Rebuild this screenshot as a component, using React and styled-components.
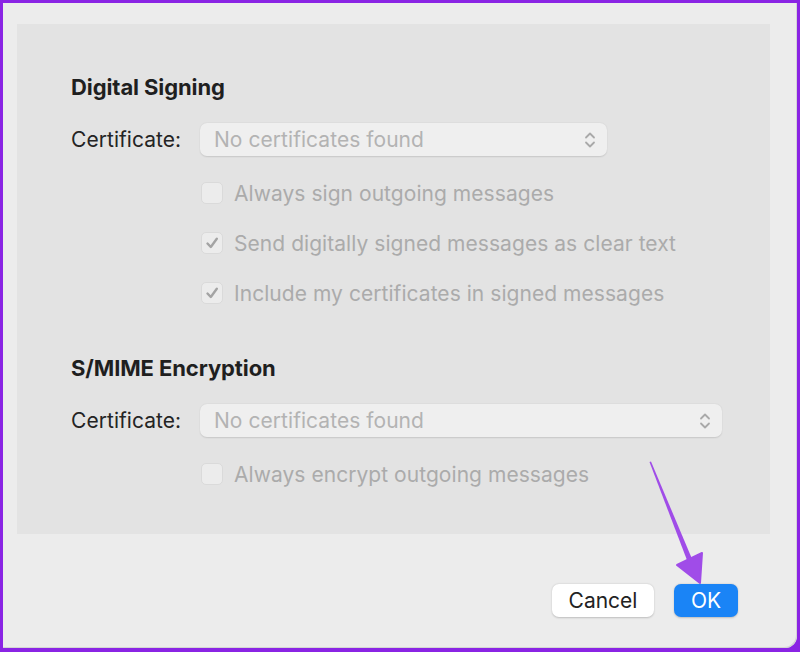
import React from 'react';
import styled, { createGlobalStyle } from 'styled-components';

const GlobalStyle = createGlobalStyle`
  html, body {
    margin: 0;
    padding: 0;
    background: #8a24e4;
  }
  body {
    font-family: Inter, "Noto Sans", "Liberation Sans", sans-serif;
    -webkit-font-smoothing: antialiased;
  }
`;

const Frame = styled.div`
  position: relative;
  width: 800px;
  height: 652px;
  box-sizing: border-box;
  padding: 3px 3px 4px 3px;
  background: #8a24e4;
`;

const Window = styled.div`
  height: 100%;
  box-sizing: border-box;
  background: #ececec;
  border-radius: 0 0 12px 0;
  box-shadow: inset -1px -1px 0 #d4d4d4;
  padding: 21px 27px 0 14px;
  display: flex;
  flex-direction: column;
`;

const Panel = styled.div`
  height: 510px;
  box-sizing: border-box;
  background: #e3e3e3;
  padding: 51px 0 0 54px;
  display: flex;
  flex-direction: column;
  gap: 48px;
`;

const Section = styled.section`
  display: flex;
  flex-direction: column;
`;

const Heading = styled.h2`
  margin: 0 0 24px;
  font-size: 22px;
  line-height: 24px;
  font-weight: 700;
  color: #1f1f1f;
  letter-spacing: -0.1px;
`;

const FieldRow = styled.div`
  display: grid;
  grid-template-columns: 129px auto;
  align-items: center;
  justify-items: start;
`;

const Label = styled.span`
  font-size: 21px;
  color: #242424;
  letter-spacing: 0.05px;
`;

const Select = styled.div`
  width: ${p => p.$width}px;
  height: 33px;
  box-sizing: border-box;
  border-radius: 7px;
  background: #efefef;
  box-shadow: 0 0.5px 1.5px rgba(0, 0, 0, 0.12);
  display: flex;
  align-items: center;
  justify-content: space-between;
  padding: 0 10px 0 14px;
  font-size: 21px;
  color: #b3b3b3;
  letter-spacing: 0.05px;
`;

const Checks = styled.div`
  display: flex;
  flex-direction: column;
  gap: 20px;
  margin-top: 22px;
  padding-left: 130px;
`;

const CheckRow = styled.div`
  height: 30px;
  display: flex;
  align-items: center;
  gap: 11px;
  font-size: 21px;
  color: #ababab;
  letter-spacing: 0.05px;
`;

const Box = styled.span`
  width: 22px;
  height: 22px;
  box-sizing: border-box;
  border-radius: 5px;
  background: #ececec;
  border: 1px solid #dadada;
  display: flex;
  align-items: center;
  justify-content: center;
`;

const Footer = styled.div`
  display: flex;
  justify-content: flex-end;
  gap: 20px;
  padding: 50px 32px 0 0;
`;

const Button = styled.button`
  height: 33px;
  min-width: ${p => p.$width}px;
  box-sizing: border-box;
  border: none;
  border-radius: 7px;
  font-family: inherit;
  font-size: 21px;
  padding: 0 16px;
  color: ${p => (p.$primary ? '#ffffff' : '#222222')};
  background: ${p => (p.$primary ? '#1a84f6' : '#ffffff')};
  box-shadow: 0 0.5px 2px rgba(0, 0, 0, 0.2);
`;

const Pointer = styled.svg`
  position: absolute;
  left: 0;
  top: 0;
  pointer-events: none;
`;

const Stepper = () => (
  <svg width="14" height="20" viewBox="0 0 14 20" fill="none">
    <path d="M3 7.5 L7 3.5 L11 7.5" stroke="#a9a9a9" strokeWidth="1.8" strokeLinecap="round" strokeLinejoin="round" />
    <path d="M3 12.5 L7 16.5 L11 12.5" stroke="#a9a9a9" strokeWidth="1.8" strokeLinecap="round" strokeLinejoin="round" />
  </svg>
);

const Check = ({ checked, children }) => (
  <CheckRow>
    <Box>
      {checked && (
        <svg width="16" height="16" viewBox="0 0 16 16" fill="none">
          <path d="M3.5 8.5 L6.8 12 L12.8 3.8" stroke="#a3a3a3" strokeWidth="2.4" strokeLinecap="round" strokeLinejoin="round" />
        </svg>
      )}
    </Box>
    {children}
  </CheckRow>
);

const sections = [
  {
    title: 'Digital Signing',
    width: 407,
    options: [
      ['Always sign outgoing messages', false],
      ['Send digitally signed messages as clear text', true],
      ['Include my certificates in signed messages', true],
    ],
  },
  {
    title: 'S/MIME Encryption',
    width: 522,
    options: [['Always encrypt outgoing messages', false]],
  },
];

export default function App() {
  return (
    <>
      <GlobalStyle />
      <Frame>
        <Window>
          <Panel>
            {sections.map(s => (
              <Section key={s.title}>
                <Heading>{s.title}</Heading>
                <FieldRow>
                  <Label>Certificate:</Label>
                  <Select $width={s.width}>
                    No certificates found
                    <Stepper />
                  </Select>
                </FieldRow>
                <Checks>
                  {s.options.map(([text, checked]) => (
                    <Check key={text} checked={checked}>{text}</Check>
                  ))}
                </Checks>
              </Section>
            ))}
          </Panel>
          <Footer>
            <Button $width={102}>Cancel</Button>
            <Button $primary $width={64}>OK</Button>
          </Footer>
        </Window>
        <Pointer width="800" height="652" viewBox="0 0 800 652">
          <path d="M649.5 462 L651 461.5 L695 566 L690 568 Z" fill="#a04ce8" />
          <path d="M677 565 L702 553 L700 583 Z" fill="#a04ce8" stroke="#a04ce8" strokeWidth="2" strokeLinejoin="round" />
        </Pointer>
      </Frame>
    </>
  );
}
